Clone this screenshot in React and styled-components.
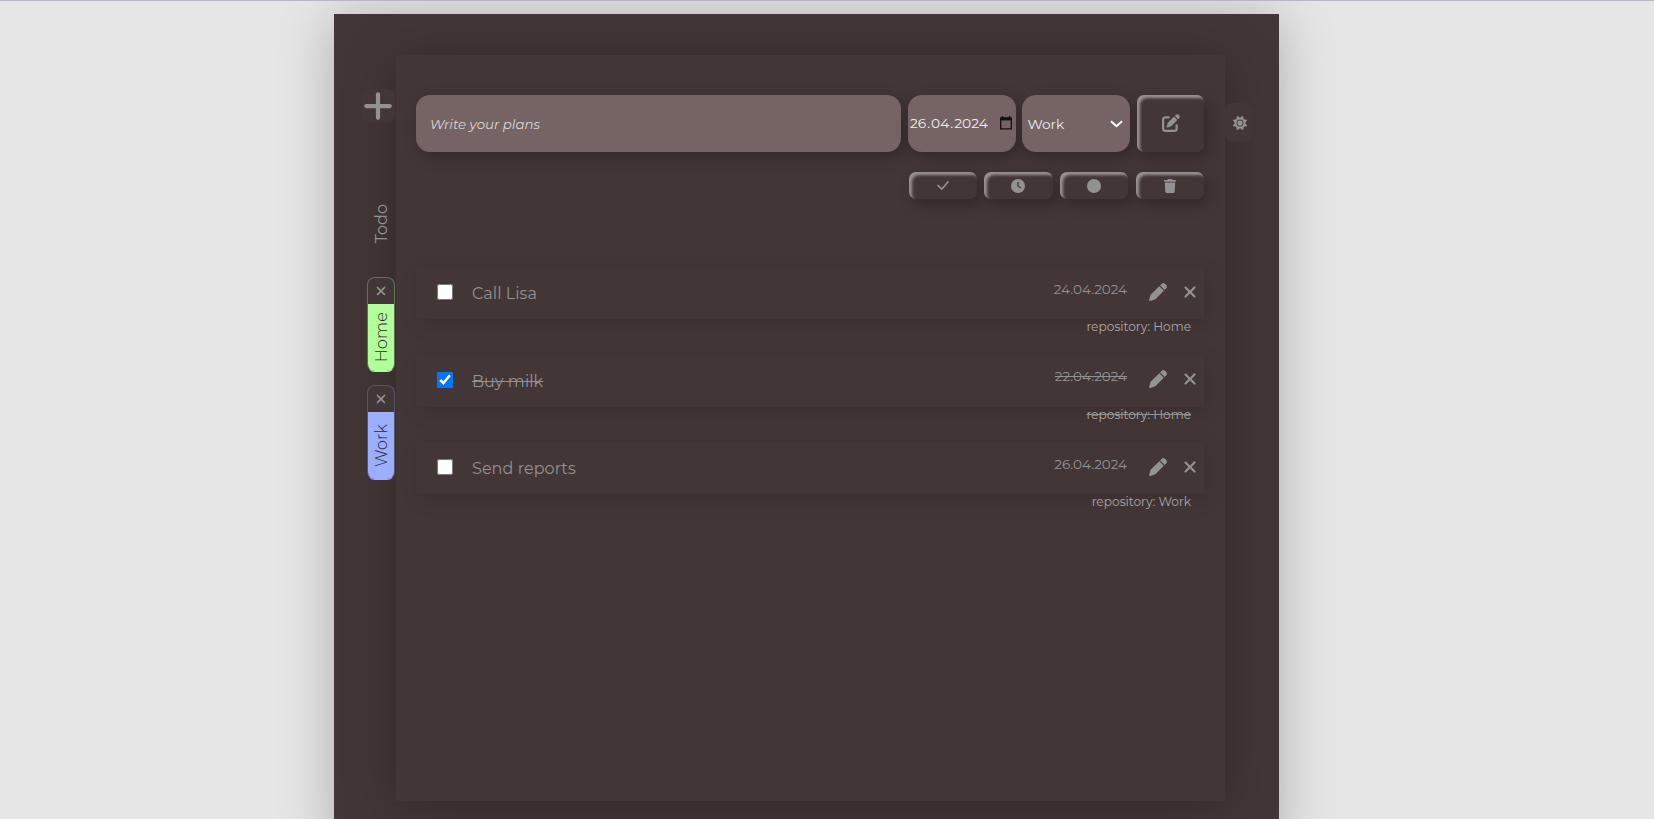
import React from "react";
import styled, { createGlobalStyle, css } from "styled-components";
import { FaPlus, FaXmark, FaPenToSquare, FaPen, FaClock, FaCircle, FaTrash, FaSun } from "react-icons/fa6";
import { BsCheckLg } from "react-icons/bs";

const GlobalStyle = createGlobalStyle`
  * { box-sizing: border-box; }
  body {
    margin: 0;
    height: 819px;
    overflow: hidden;
    background: #e6e6e6;
    font-family: Montserrat, Inter, "Liberation Sans", sans-serif;
    color: #929292;
  }
  button, input { font: inherit; color: inherit; }
`;

const Page = styled.div`
  height: 819px;
  overflow: hidden;
  border-top: 1px solid #b8b4c4;
  padding: 13px 375px 0 334px;
`;

const Board = styled.main`
  display: flex;
  align-items: flex-start;
  height: 830px;
  padding-top: 41px;
  background: #433636;
  box-shadow: 0 5px 50px rgba(0, 0, 0, 0.25);
`;

const Sidebar = styled.aside`
  width: 62px;
  padding-top: 34px;
  display: flex;
  flex-direction: column;
  align-items: flex-end;
  position: relative;
  z-index: 1;
`;

const AddButton = styled.button`
  display: flex;
  align-items: center;
  justify-content: center;
  width: 34px;
  height: 34px;
  margin-right: 1px;
  padding: 0;
  border: 0;
  border-radius: 8px;
  background: #433636;
  color: #929292;
  svg { width: 34px; height: 34px; flex: none; }
`;

const Vertical = styled.span`
  writing-mode: vertical-rl;
  transform: rotate(180deg);
  font-size: 16px;
  font-weight: ${(p) => (p.$dark ? 300 : 400)};
  line-height: 20px;
  letter-spacing: ${(p) => (p.$dark ? 0.2 : 0)}px;
  color: ${(p) => (p.$dark ? "#332828" : "#929292")};
`;

const TodoLabel = styled.div`
  display: flex;
  justify-content: center;
  align-items: center;
  width: 28px;
  height: 46px;
  margin: 78px 0 0 0;
`;

const Tab = styled.div`
  width: 28px;
  height: 95px;
  margin: ${(p) => p.$top}px 1px 0 0;
  border: 1px solid ${(p) => p.$edge};
  border-bottom-color: ${(p) => p.$color};
  border-radius: 8px;
  background: #433636;
  overflow: hidden;
`;

const TabClose = styled.div`
  display: flex;
  align-items: center;
  justify-content: center;
  height: 26px;
  padding: 0 0 1px;
  svg { width: 14px; height: 14px; }
`;

const TabName = styled.div`
  display: flex;
  align-items: center;
  justify-content: center;
  height: 68px;
  padding: 0 0 2px 2px;
  background: ${(p) => p.$color};
`;

const Panel = styled.section`
  width: 829px;
  height: 746px;
  padding: 40px 21px 0 20px;
  background: #433636;
  box-shadow: 0 5px 50px rgba(0, 0, 0, 0.25);
`;

const FormRow = styled.form`
  display: grid;
  grid-template-columns: 485px 108px 108px 67px;
  column-gap: 6.7px;
  height: 57px;
`;

const field = css`
  height: 57px;
  border: 0;
  border-radius: 14px;
  background: #766363;
  box-shadow: 4px 5px 15px rgba(0, 0, 0, 0.25);
`;

const PlanInput = styled.input`
  ${field}
  width: 485px;
  padding: 0 14px;
  outline: none;
  font-size: 13.33px;
  &::placeholder { color: #dcd8d8; font-style: italic; opacity: 1; }
`;

const DateField = styled.div`
  ${field}
  display: flex;
  align-items: center;
  justify-content: space-between;
  padding: 0 4px 1px 2px;
  color: #eeeeee;
  font-size: 13.8px;
`;

const DatePart = styled.span`
  padding: 0 ${(p) => (p.$dot ? 0.7 : 0.3)}px;
`;

const SelectField = styled(DateField)`
  padding: 1px 7px 0 5px;
`;

const raised = css`
  display: flex;
  align-items: center;
  justify-content: center;
  padding: 0;
  border: 0;
  background: #433636;
  color: #929292;
  border-radius: 7px;
  box-shadow: inset 3px 3px 3px rgba(255, 255, 255, 0.46), 4px 6px 14px rgba(0, 0, 0, 0.25);
`;

const SaveButton = styled.button`
  ${raised}
  padding-bottom: 1px;
  svg { width: 18px; height: 18px; }
`;

const Filters = styled.div`
  display: flex;
  justify-content: flex-end;
  gap: 7.4px;
  margin-top: 20px;
`;

const FilterButton = styled.button`
  ${raised}
  width: 68.3px;
  height: 27px;
  svg { width: 14px; height: 14px; }
  &:first-child svg { width: 17px; height: 17px; }
`;

const Tasks = styled.ul`
  list-style: none;
  margin: 68px 0 0;
  padding: 0;
`;

const Task = styled.li`
  height: 87.5px;
  text-decoration: ${(p) => (p.$done ? "line-through" : "none")};
`;

const TaskRow = styled.div`
  display: flex;
  align-items: center;
  height: 52px;
  padding: 0 8px 1px 21px;
  box-shadow: 4px 6px 20px rgba(0, 0, 0, 0.13);
`;

const Check = styled.input`
  width: 16px;
  height: 16px;
  margin: 0 19px 1px 0;
`;

const Title = styled.span`
  flex: 1;
  padding-top: 2px;
  font-size: 16px;
  letter-spacing: 0.06px;
`;

const Due = styled.span`
  font-size: 13.5px;
  padding-bottom: 8px;
`;

const Actions = styled.div`
  display: flex;
  align-items: center;
  gap: 14px;
  margin: 0 0 2px 22px;
  svg:first-child { width: 18px; height: 18px; }
  svg:last-child { width: 18px; height: 18px; margin-right: -3px; }
`;

const Repository = styled.div`
  padding-right: 13px;
  text-align: right;
  font-size: 12.2px;
  line-height: 16px;
  color: #aaa7a7;
`;

const Settings = styled.button`
  display: flex;
  align-items: center;
  justify-content: center;
  width: 27px;
  height: 39px;
  margin-top: 48px;
  padding: 0 0 0 2px;
  border: 0;
  border-radius: 8px;
  background: #433636;
  color: #929292;
  svg { width: 14px; height: 14px; }
`;

const CalendarIcon = () => (
  <svg width="12" height="14" viewBox="0 0 12 14">
    <path d="M2.5 0v3M9.5 0v3M.7 2h10.6v10.8H.7z" fill="none" stroke="#111" strokeWidth="1.3" />
    <path d="M0 2h12v2.4H0z" fill="#111" />
  </svg>
);

const ChevronIcon = () => (
  <svg width="13" height="8" viewBox="0 0 13 8">
    <path d="M1 1.2l5.5 5 5.5-5" fill="none" stroke="#fff" strokeWidth="2" />
  </svg>
);

const tasks = [
  { title: "Call Lisa", due: "24.04.2024", repo: "Home" },
  { title: "Buy milk", due: "22.04.2024", repo: "Home", done: true },
  { title: "Send reports", due: "26.04.2024", repo: "Work" },
];

const repositories = [
  { name: "Home", color: "#b0ff9a", edge: "#5f7355", top: 30 },
  { name: "Work", color: "#9baeff", edge: "#57546d", top: 13 },
];

export default function App() {
  return (
    <Page>
      <GlobalStyle />
      <Board>
        <Sidebar>
          <AddButton><FaPlus /></AddButton>
          <TodoLabel><Vertical>Todo</Vertical></TodoLabel>
          {repositories.map((r) => (
            <Tab key={r.name} $top={r.top} $edge={r.edge} $color={r.color}>
              <TabClose><FaXmark /></TabClose>
              <TabName $color={r.color}><Vertical $dark>{r.name}</Vertical></TabName>
            </Tab>
          ))}
        </Sidebar>
        <Panel>
          <FormRow>
            <PlanInput placeholder="Write your plans" />
            <DateField>
              <span>
                <DatePart>26</DatePart><DatePart $dot>.</DatePart><DatePart>04</DatePart><DatePart $dot>.</DatePart><DatePart>2024</DatePart>
              </span>
              <CalendarIcon />
            </DateField>
            <SelectField><span>Work</span><ChevronIcon /></SelectField>
            <SaveButton type="button"><FaPenToSquare /></SaveButton>
          </FormRow>
          <Filters>
            <FilterButton><BsCheckLg /></FilterButton>
            <FilterButton><FaClock /></FilterButton>
            <FilterButton><FaCircle /></FilterButton>
            <FilterButton><FaTrash /></FilterButton>
          </Filters>
          <Tasks>
            {tasks.map((t) => (
              <Task key={t.title} $done={t.done}>
                <TaskRow>
                  <Check type="checkbox" defaultChecked={t.done} />
                  <Title>{t.title}</Title>
                  <Due>{t.due}</Due>
                  <Actions><FaPen /><FaXmark /></Actions>
                </TaskRow>
                <Repository>repository: {t.repo}</Repository>
              </Task>
            ))}
          </Tasks>
        </Panel>
        <Settings><FaSun /></Settings>
      </Board>
    </Page>
  );
}
